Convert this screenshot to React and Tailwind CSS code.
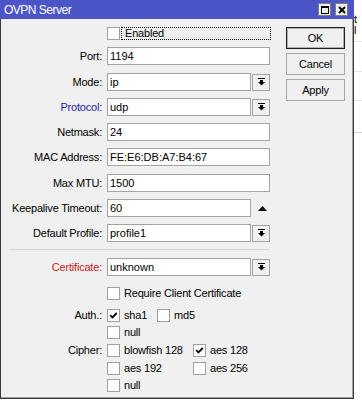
import React from 'react';

const DropIcon = () => (
  <svg width="7" height="8" viewBox="0 0 7 8" className="block">
    <rect x="0" y="0" width="7" height="1" fill="#000" />
    <rect x="2" y="2" width="3" height="2" fill="#000" />
    <polygon points="0,4 7,4 3.5,7.5" fill="#000" />
  </svg>
);

const Checkbox = ({ checked }) => (
  <span className="w-[13px] h-[13px] border border-[#a0a0a0] bg-white flex items-center justify-center shrink-0">
    {checked && (
      <svg width="9" height="9" viewBox="0 0 9 9" className="block">
        <polyline points="1.2,4.2 3.4,6.4 7.8,2" fill="none" stroke="#000" strokeWidth="1.8" />
      </svg>
    )}
  </span>
);

const CheckItem = ({ checked, label, width }) => (
  <div className={`flex items-center gap-[4px] ${width}`}>
    <Checkbox checked={checked} />
    <span className="leading-none">{label}</span>
  </div>
);

const Label = ({ children, color = 'text-black' }) => (
  <div className={`w-[102px] text-right pr-[1px] leading-none ${color}`}>{children}</div>
);

const Field = ({ value, dropdown, spinner }) => {
  if (!dropdown && !spinner) {
    return (
      <div className="ml-[4px] w-[163px] h-[18px] border border-[#a3a3a3] bg-white flex items-center pl-[2px] leading-none tracking-normal">
        {value}
      </div>
    );
  }
  return (
    <div className="ml-[4px] flex items-center">
      <div className="w-[144px] h-[18px] border border-[#a3a3a3] bg-white flex items-center pl-[2px] leading-none tracking-normal">
        {value}
      </div>
      {dropdown && (
        <div className="ml-[1px] w-[18px] h-[17px] border border-[#a3a3a3] bg-[#f0f0f0] flex items-center justify-center">
          <DropIcon />
        </div>
      )}
      {spinner && (
        <div className="ml-[7px] flex items-center">
          <svg width="9" height="5" viewBox="0 0 9 5" className="block">
            <polygon points="0,5 9,5 4.5,0" fill="#000" />
          </svg>
        </div>
      )}
    </div>
  );
};

const Row = ({ label, color, mt, ...field }) => (
  <div className={`flex items-center h-[18px] ${mt}`}>
    <Label color={color}>{label}</Label>
    <Field {...field} />
  </div>
);

const Button = ({ children, primary, mt }) => (
  <div
    className={`w-[59px] h-[22px] flex items-center justify-center bg-[#f0f0f0] leading-none ${mt} ${
      primary ? 'border border-[#202020] shadow-[inset_0_0_0_1px_#b0b0b0]' : 'border border-[#a8a8a8]'
    }`}
  >
    {children}
  </div>
);

export default function App() {
  return (
    <div className="w-[362px] h-[407px] bg-white relative overflow-hidden font-['Liberation_Sans',Arial,sans-serif] text-[11px] text-black">
      {/* window behind, peeking out on the right */}
      <div className="absolute left-[354px] top-[14px] text-[11px] leading-none">t l</div>
      <div className="absolute left-[354px] top-[41px] w-[8px] h-px bg-[#e4e4e4]" />
      <div className="absolute left-[354px] top-[71px] w-[8px] h-px bg-[#e4e4e4]" />
      <div className="absolute left-[354px] top-[100px] w-[8px] h-px bg-[#e4e4e4]" />
      <div className="absolute left-[354px] top-[132px] w-[8px] h-px bg-[#d0d0d0]" />

      <div className="w-[354px] h-[399px] flex flex-col">
        {/* title bar */}
        <div className="h-[19px] bg-[#4b55c7] flex items-center justify-between pl-[4px] pr-[6px] shrink-0">
          <span className="text-white text-[12px] tracking-[-0.5px] leading-none">OVPN Server</span>
          <div className="flex items-center gap-[4px]">
            <div className="w-[13px] h-[13px] bg-[#ececec] border border-[#808080] flex items-center justify-center">
              <div className="w-[8px] h-[8px] border border-black border-t-2" />
            </div>
            <div className="w-[13px] h-[13px] bg-[#ececec] border border-[#808080] flex items-center justify-center">
              <svg width="8" height="8" viewBox="0 0 8 8" className="block">
                <path d="M1 1 L7 7 M7 1 L1 7" stroke="#000" strokeWidth="1.8" />
              </svg>
            </div>
          </div>
        </div>

        {/* body */}
        <div className="flex-1 flex bg-[#f0f0f0] border-l border-r border-b border-[#3a3a3a] shadow-[inset_-1px_-1px_0_#a0a0a0] tracking-[-0.2px]">
          <div className="w-[285px] flex flex-col">
            <div className="flex items-center h-[13px] mt-[8px] pl-[106px]">
              <Checkbox />
              <div className="ml-[1px] w-[150px] h-[13px] border border-dotted border-black flex items-center pl-[3px] leading-none">
                Enabled
              </div>
            </div>

            <Row label="Port:" value="1194" mt="mt-[7px]" />
            <Row label="Mode:" value="ip" dropdown mt="mt-[8px]" />
            <Row label="Protocol:" value="udp" dropdown color="text-[#1c22a8]" mt="mt-[7px]" />
            <Row label="Netmask:" value="24" mt="mt-[7px]" />
            <Row label="MAC Address:" value="FE:E6:DB:A7:B4:67" mt="mt-[7px]" />
            <Row label="Max MTU:" value="1500" mt="mt-[8px]" />
            <Row label="Keepalive Timeout:" value="60" spinner mt="mt-[7px]" />
            <Row label="Default Profile:" value="profile1" dropdown mt="mt-[7px]" />

            <div className="mt-[7px] ml-[8px] w-[261px] h-px bg-[#d9d9d9]" />

            <Row label="Certificate:" value="unknown" dropdown color="text-[#d01818]" mt="mt-[8px]" />

            <div className="flex items-center h-[13px] mt-[11px] pl-[106px]">
              <CheckItem label="Require Client Certificate" />
            </div>

            <div className="flex items-center h-[13px] mt-[9px]">
              <Label>Auth.:</Label>
              <div className="ml-[4px] flex items-center">
                <CheckItem checked label="sha1" width="w-[50px]" />
                <CheckItem label="md5" />
              </div>
            </div>
            <div className="flex items-center h-[13px] mt-[4px] pl-[106px]">
              <CheckItem label="null" />
            </div>

            <div className="flex items-center h-[13px] mt-[5px]">
              <Label>Cipher:</Label>
              <div className="ml-[4px] flex items-center">
                <CheckItem label="blowfish 128" width="w-[86px]" />
                <CheckItem checked label="aes 128" />
              </div>
            </div>
            <div className="flex items-center h-[13px] mt-[5px] pl-[106px]">
              <CheckItem label="aes 192" width="w-[86px]" />
              <CheckItem label="aes 256" />
            </div>
            <div className="flex items-center h-[13px] mt-[4px] pl-[106px]">
              <CheckItem label="null" />
            </div>
          </div>

          <div className="flex flex-col">
            <Button primary mt="mt-[8px]">OK</Button>
            <Button mt="mt-[4px]">Cancel</Button>
            <Button mt="mt-[4px]">Apply</Button>
          </div>
        </div>
      </div>
    </div>
  );
}
